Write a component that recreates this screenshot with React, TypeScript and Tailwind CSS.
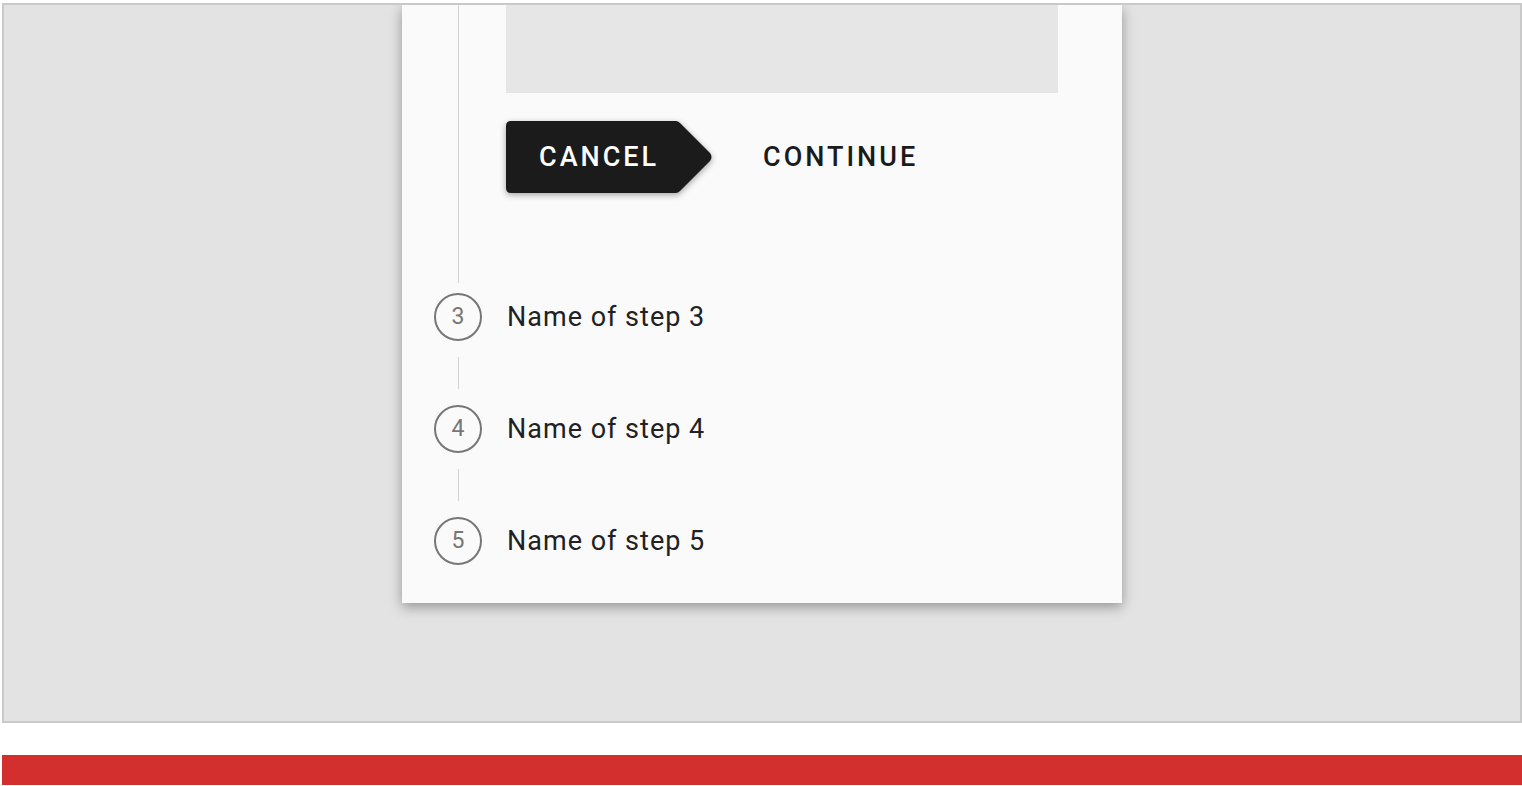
import React from 'react';

const steps = [3, 4, 5];

const CancelButton: React.FC = () => (
  <button className="relative h-[72px] w-[206px] text-left">
    <svg
      className="absolute inset-0 drop-shadow-[0_2px_3px_rgba(0,0,0,0.35)]"
      width="206"
      height="72"
      viewBox="0 0 206 72"
    >
      <path
        d="M5 0 H170 Q172 0 174 2 L204 32 Q207 36 204 40 L174 70 Q172 72 170 72 H5 Q0 72 0 67 V5 Q0 0 5 0 Z"
        fill="#1b1b1b"
      />
    </svg>
    <span className="relative pl-[33px] text-[27px] font-medium tracking-[3px] text-white">CANCEL</span>
  </button>
);

export default function App() {
  return (
    <div
      className="pt-[3px] pl-[2px] bg-white min-h-screen"
      style={{ fontFamily: 'Roboto, "Liberation Sans", sans-serif' }}
    >
      {/* Frame */}
      <div className="w-[1520px] h-[720px] border-2 border-[#c9c9c9] bg-[#e3e3e3] overflow-hidden flex justify-center">
        {/* Card */}
        <div className="w-[720px] h-[598px] bg-[#fafafa] shadow-[0_4px_12px_rgba(0,0,0,0.35)] flex flex-col">
          {/* Active step content */}
          <div className="flex h-[278px]">
            <div className="w-[104px] pl-[56px]">
              <div className="w-px h-full bg-[#d2d2d2]" />
            </div>
            <div className="flex-1 pr-16">
              <div className="h-[88px] bg-[#e6e6e6]" />
              <div className="mt-[28px] flex items-center gap-[51px]">
                <CancelButton />
                <span className="text-[27px] font-medium tracking-[3px] text-[#1b1b1b]">CONTINUE</span>
              </div>
            </div>
          </div>

          {/* Remaining steps */}
          <div className="pt-[10px] flex flex-col">
            {steps.map((n, i) => (
              <div key={n} className="flex flex-col">
                {i > 0 && (
                  <div className="w-[104px] pl-[56px] py-4">
                    <div className="w-px h-8 bg-[#d2d2d2]" />
                  </div>
                )}
                <div className="flex items-center h-12">
                  <div className="w-[104px] pl-8">
                    <div className="w-12 h-12 pt-px rounded-full border-2 border-[#767676] flex items-center justify-center text-[23px] text-[#767676]">
                      {n}
                    </div>
                  </div>
                  <span className="text-[27px] tracking-[1px] text-[#212121] ml-px">Name of step {n}</span>
                </div>
              </div>
            ))}
          </div>
        </div>
      </div>

      {/* Red bar */}
      <div className="mt-[32px] w-[1520px] h-[30px] bg-[#d32f2f]" />
    </div>
  );
}
